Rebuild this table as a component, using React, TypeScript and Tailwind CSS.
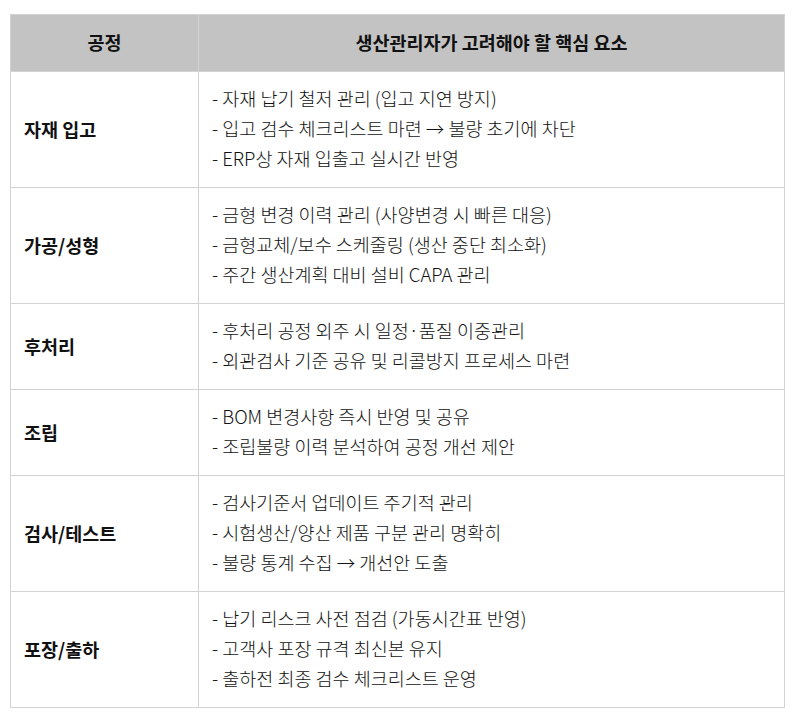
const ROWS: { stage: string; items: string[] }[] = [
  {
    stage: "자재 입고",
    items: [
      "- 자재 납기 철저 관리 (입고 지연 방지)",
      "- 입고 검수 체크리스트 마련 → 불량 초기에 차단",
      "- ERP상 자재 입출고 실시간 반영",
    ],
  },
  {
    stage: "가공/성형",
    items: [
      "- 금형 변경 이력 관리 (사양변경 시 빠른 대응)",
      "- 금형교체/보수 스케줄링 (생산 중단 최소화)",
      "- 주간 생산계획 대비 설비 CAPA 관리",
    ],
  },
  {
    stage: "후처리",
    items: ["- 후처리 공정 외주 시 일정·품질 이중관리", "- 외관검사 기준 공유 및 리콜방지 프로세스 마련"],
  },
  {
    stage: "조립",
    items: ["- BOM 변경사항 즉시 반영 및 공유", "- 조립불량 이력 분석하여 공정 개선 제안"],
  },
  {
    stage: "검사/테스트",
    items: ["- 검사기준서 업데이트 주기적 관리", "- 시험생산/양산 제품 구분 관리 명확히", "- 불량 통계 수집 → 개선안 도출"],
  },
  {
    stage: "포장/출하",
    items: [
      "- 납기 리스크 사전 점검 (가동시간표 반영)",
      "- 고객사 포장 규격 최신본 유지",
      "- 출하전 최종 검수 체크리스트 운영",
    ],
  },
];

export default function App() {
  return (
    <div
      className="min-h-[716px] w-[796px] bg-white pl-[10px] pt-[14px] text-[18.5px] text-[#111]"
      style={{ fontFamily: '"Noto Sans CJK KR", "Noto Sans", sans-serif' }}
    >
      <table className="w-[775px] border-collapse">
        <thead>
          <tr className="h-[57px] bg-[#c3c3c3]">
            <th className="w-[188px] border border-[#d3d3d3] font-bold">공정</th>
            <th className="border border-[#d3d3d3] font-bold">생산관리자가 고려해야 할 핵심 요소</th>
          </tr>
        </thead>
        <tbody>
          {ROWS.map((row) => (
            <tr key={row.stage} className={row.items.length === 3 ? "h-[116px]" : "h-[86px]"}>
              <td className="border border-[#d3d3d3] px-[13px] font-bold">{row.stage}</td>
              <td className="border border-[#d3d3d3] px-[13px] pb-[3px] leading-[30px] font-light">
                {row.items.map((t) => (
                  <div key={t}>{t}</div>
                ))}
              </td>
            </tr>
          ))}
        </tbody>
      </table>
    </div>
  );
}
